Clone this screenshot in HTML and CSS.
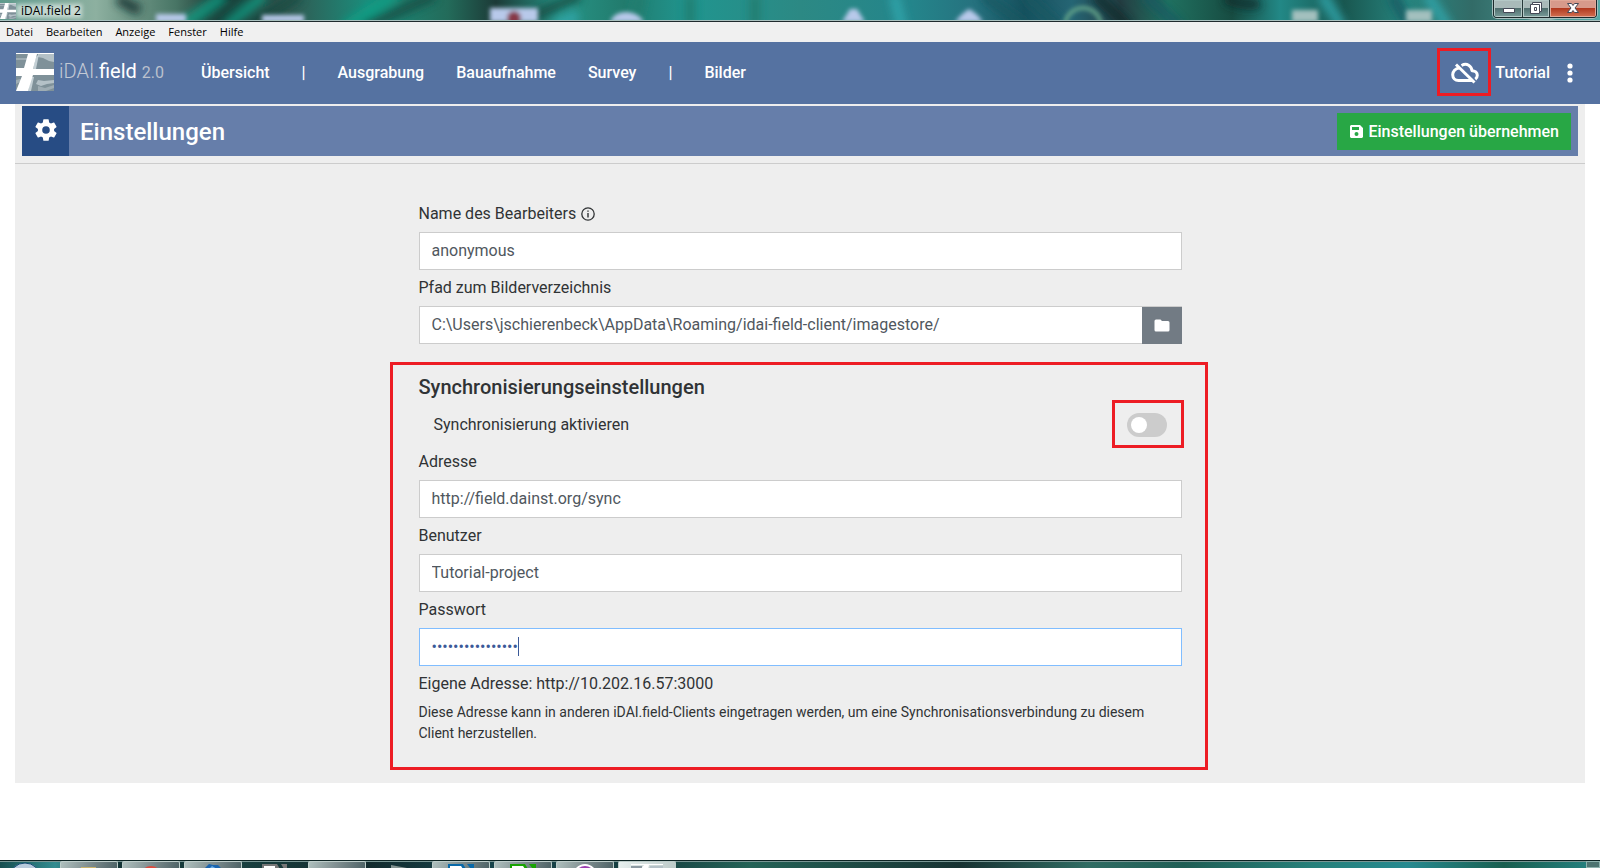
FILE: index.html
```html
<!DOCTYPE html>
<html lang="de">
<head>
<meta charset="utf-8">
<title>iDAI.field 2</title>
<link rel="stylesheet" href="styles.css">
</head>
<body>
<svg class="symbols" aria-hidden="true">
  <symbol id="logo" viewBox="0 0 38 38">
    <path fill="#7f9199" d="M0 0h38v38H0z"/>
    <path fill="#b4c1c7" d="M22 1h16v8l-5-1-6-3-5-1zM22 27l6 1 10-1v3l-7 1-6 2-5-2z"/>
    <path fill="#9fadb4" d="M0 5h12v2H0zM22 33l7 2 9-3v3l-8 3h-8zM0 27l4-1 2 2-6 3z"/>
    <path fill="#c4d0d5" d="M20 4l3-3-3 15h-3zM15 24h3l-3 14h-3z"/>
    <path fill="#fff" d="M0 0h38v1H0zM12 1h9l-4 15h21v6H17l-5 16H0l6-15H0v-8h8z"/>
  </symbol>
</svg>

<header class="titlebar">
  <svg class="titlebar-glass" viewBox="0 0 1600 22" preserveAspectRatio="none" aria-hidden="true">
    <defs>
      <linearGradient id="glass">
        <stop offset="0" stop-color="#5f9a8c"/><stop offset=".06" stop-color="#8db0a0"/>
        <stop offset=".11" stop-color="#487565"/><stop offset=".14" stop-color="#172f2d"/>
        <stop offset=".18" stop-color="#315850"/><stop offset=".23" stop-color="#1b8d7c"/>
        <stop offset=".28" stop-color="#236b5a"/><stop offset=".31" stop-color="#1c3a37"/>
        <stop offset=".35" stop-color="#279486"/><stop offset=".39" stop-color="#227b6d"/>
        <stop offset=".43" stop-color="#20958f"/><stop offset=".5" stop-color="#2c8984"/>
        <stop offset=".57" stop-color="#24858b"/><stop offset=".61" stop-color="#26717e"/>
        <stop offset=".64" stop-color="#18505d"/><stop offset=".67" stop-color="#256574"/>
        <stop offset=".7" stop-color="#243d42"/><stop offset=".73" stop-color="#207160"/>
        <stop offset=".77" stop-color="#174c42"/><stop offset=".8" stop-color="#228886"/>
        <stop offset=".84" stop-color="#195750"/><stop offset=".88" stop-color="#27857f"/>
        <stop offset=".92" stop-color="#326b67"/><stop offset="1" stop-color="#55aaa6"/>
      </linearGradient>
      <filter id="soft" x="-5%" y="-50%" width="110%" height="200%"><feGaussianBlur stdDeviation="2"/></filter>
      <filter id="softer" x="-5%" y="-100%" width="110%" height="300%"><feGaussianBlur stdDeviation="4"/></filter>
    </defs>
    <path fill="url(#glass)" d="M0 0h1600v22H0z"/>
    <g filter="url(#softer)" opacity=".8" fill="none" stroke-width="11">
      <path stroke="#10a086" d="M180 27l44-32M225 27l40-32M345 27l50-32"/>
      <path stroke="#154c43" d="M200 27l44-32M250 27l50-32M365 27l70-32M510 27l70-32"/>
      <path stroke="#31a8ae" d="M555 26q16-6 22-12M894-5l8 32M1322-5l20 32M1427-5l21 32"/>
      <path stroke="#175862" d="M983-5l44 32M1024-5l36 32M1145-5l35 32M1392-5l18 32"/>
      <path stroke="#247b6d" d="M641-5l-8 32M690-5v32M755-5v32"/>
      <path stroke="#102c2b" d="M1095-5l34 32M1225-2q25 10 34 4M118-2q12 9 22 12"/>
    </g>
    <g filter="url(#soft)">
      <path fill="#b8c9ea" d="M156 14h30v8h-30zM262 15h42v7h-42zM490 8h48v14h-48zM610 22q4-10 16-10t18 10zM842 22l8-13h7l8 13zM955 22q6-8 14-13 9 5 14 13z"/>
      <path fill="#a3c0be" d="M1292 10h26v12h-26zM1406 10h26v12h-26zM1530 16h24v6h-24z"/>
      <circle cx="514" cy="18" r="7" fill="#873846"/>
      <circle cx="1083" cy="26" r="18" fill="none" stroke="#61a188" stroke-width="4"/>
      <path fill="#edf3f0" opacity=".65" d="M16 4h66v14H16z"/>
    </g>
    <path fill="#a9c1bf" d="M0 20h1600v1H0z"/>
    <path fill="#202b2e" d="M0 21h1600v1H0z"/>
  </svg>
  <svg class="titlebar-logo" aria-hidden="true"><use href="#logo"/></svg>
  <span class="titlebar-text">iDAI.field 2</span>
  <div class="window-controls">
    <button class="window-button" type="button" aria-label="Minimieren">
      <svg width="28" height="17" viewBox="0 0 28 17"><path fill="#fff" stroke="#454957" d="M9.500 8.500h11v4h-11z"/></svg>
    </button>
    <button class="window-button" type="button" aria-label="Verkleinern">
      <svg width="26" height="17" viewBox="0 0 26 17"><path fill="#fff" stroke="#454957" d="M9.500 2.500h9v9h-2v2h-9v-9h2zM11.500 7.500h2v3h-2z"/><path fill="none" stroke="#454957" d="M9.500 4.500h7v7"/></svg>
    </button>
    <button class="window-button window-button-close" type="button" aria-label="Schließen">
      <svg width="46" height="17" viewBox="0 0 46 17"><path fill="#fff" stroke="#454957" d="M17.500 3.500h4l1.500 2 1.500-2h4l-3.500 4.500 3.500 4.500h-4l-1.500-2-1.500 2h-4l3.500-4.500z"/></svg>
    </button>
  </div>
</header>

<nav class="menubar" aria-label="Menü">
  <button type="button">Datei</button>
  <button type="button">Bearbeiten</button>
  <button type="button">Anzeige</button>
  <button type="button">Fenster</button>
  <button type="button">Hilfe</button>
</nav>

<nav class="navbar" aria-label="Navigation">
  <a class="brand" href="#">
    <svg class="brand-logo" aria-hidden="true"><use href="#logo"/></svg>
    <span class="brand-name"><span class="brand-thin">iDAI.</span><span class="brand-strong">field</span> <span class="brand-version">2.0</span></span>
  </a>
  <div class="nav-links">
    <a href="#">Übersicht</a>
    <span>|</span>
    <a href="#">Ausgrabung</a>
    <a href="#">Bauaufnahme</a>
    <a href="#">Survey</a>
    <span>|</span>
    <a href="#">Bilder</a>
  </div>
  <div class="nav-status">
    <span class="sync-state">
      <svg width="28" height="22" viewBox="0 0 28 22" aria-label="Nicht synchronisiert">
        <g fill="none" stroke="#fff" stroke-width="3" stroke-linejoin="round">
          <path d="M8 6C4.500 6.500 1.700 9.500 1.700 12.800c0 3.400 2.500 5.700 5.800 5.700h13.500"/>
          <path d="M10.500 3.500C16 .500 20.500 4 21 8.700c3 0 5.300 1.800 5.300 4.600 0 1.600-.700 2.900-2 3.900"/>
          <path d="M5 2.500l18.500 18"/>
        </g>
      </svg>
    </span>
    <span class="project">Tutorial</span>
    <button class="more" type="button" aria-label="Mehr">
      <svg width="6" height="20" viewBox="0 0 6 20"><g fill="#fff"><circle cx="3" cy="3" r="2.600"/><circle cx="3" cy="10" r="2.600"/><circle cx="3" cy="17" r="2.600"/></g></svg>
    </button>
  </div>
</nav>

<main class="panel">
  <div class="panel-header">
    <div class="heading-bar">
      <span class="heading-icon">
        <svg width="26" height="26" viewBox="0 0 24 24" aria-hidden="true"><path fill="#fff" d="M19.430 12.980c.040-.320.070-.640.070-.980s-.030-.660-.070-.980l2.110-1.650c.190-.150.240-.420.120-.640l-2-3.460c-.120-.220-.390-.300-.610-.220l-2.490 1c-.520-.400-1.080-.730-1.690-.980l-.380-2.650C14.460 2.180 14.250 2 14 2h-4c-.250 0-.460.180-.490.420l-.380 2.650c-.610.250-1.170.590-1.690.980l-2.490-1c-.230-.090-.490 0-.610.220l-2 3.460c-.130.220-.070.490.120.640l2.110 1.650c-.040.320-.070.650-.070.980s.030.660.070.980l-2.110 1.650c-.190.150-.240.420-.120.640l2 3.460c.120.220.390.300.610.220l2.490-1c.520.400 1.080.730 1.690.980l.380 2.650c.030.240.240.420.490.420h4c.250 0 .460-.180.490-.420l.380-2.650c.610-.250 1.170-.590 1.690-.980l2.490 1c.230.090.490 0 .610-.220l2-3.460c.120-.220.070-.490-.120-.640zM12 15.500A3.500 3.500 0 1 1 12 8.500a3.500 3.500 0 0 1 0 7z"/></svg>
      </span>
      <h1>Einstellungen</h1>
      <button class="apply" type="submit" form="settings">
        <svg width="13" height="13" viewBox="0 0 13 13" aria-hidden="true"><path fill="#fff" fill-rule="evenodd" d="M1 0h9l3 3v9l-1 1H1l-1-1V1zM2 2v3h7V2zm4.500 5a2 2 0 1 0 0 4 2 2 0 0 0 0-4z"/></svg>
        <span class="apply-text">Einstellungen übernehmen</span>
      </button>
    </div>
  </div>

  <form class="settings" id="settings">
    <div class="field">
      <label for="editor">Name des Bearbeiters
        <svg class="info" width="14" height="14" viewBox="0 0 14 14" aria-hidden="true"><circle cx="7" cy="7" r="6.200" fill="none" stroke="currentColor" stroke-width="1.300"/><path fill="currentColor" d="M6.300 3.400h1.400v1.400H6.300zM6.300 6h1.400v4.600H6.300z"/></svg>
      </label>
      <input class="text" id="editor" type="text" value="anonymous">
    </div>
    <div class="field">
      <label for="path">Pfad zum Bilderverzeichnis</label>
      <div class="input-group">
        <input class="text" id="path" type="text" value="C:\Users\jschierenbeck\AppData\Roaming/idai-field-client/imagestore/">
        <button class="browse" type="button" aria-label="Verzeichnis wählen">
          <svg width="16" height="13" viewBox="0 0 16 13" aria-hidden="true"><path fill="#fff" d="M2 .500h4.500L8 2h6q1.500 0 1.500 1.500v7.500q0 1.500-1.500 1.500H2Q.500 12.500.500 11V2Q.500.500 2 .500z"/></svg>
        </button>
      </div>
    </div>

    <section class="sync">
      <h2>Synchronisierungseinstellungen</h2>
      <div class="toggle-row">
        <label for="enable">Synchronisierung aktivieren</label>
        <span class="toggle-mark"><input class="toggle" id="enable" type="checkbox"></span>
      </div>
      <div class="field">
        <label for="address">Adresse</label>
        <input class="text" id="address" type="text" value="http://field.dainst.org/sync">
      </div>
      <div class="field">
        <label for="user">Benutzer</label>
        <input class="text" id="user" type="text" value="Tutorial-project">
      </div>
      <div class="field">
        <label for="password">Passwort</label>
        <div class="password">
          <input class="text" id="password" type="password" value="tutorialpassword" autofocus>
          <span class="caret"></span>
        </div>
      </div>
      <p class="own-address">Eigene Adresse: http://10.202.16.57:3000</p>
      <p class="hint">Diese Adresse kann in anderen iDAI.field-Clients eingetragen werden, um eine Synchronisationsverbindung zu diesem Client herzustellen.</p>
    </section>
  </form>
</main>

<footer class="taskbar">
  <svg class="start" width="30" height="7" viewBox="0 0 30 7" aria-hidden="true"><ellipse cx="15" cy="15" rx="15" ry="14" fill="#b9cbdc" stroke="#174b74"/></svg>
  <span class="task"><svg width="16" height="7" viewBox="0 0 16 7"><path fill="#c9b36b" d="M0 5h15v2H0z"/></svg></span>
  <span class="task"><svg width="22" height="7" viewBox="0 0 22 7"><circle cx="11" cy="15" r="11" fill="#dd4b3e"/></svg></span>
  <span class="task"><svg width="18" height="7" viewBox="0 0 18 7"><path fill="#1c65ae" d="M0 7l5-5 4 1 5 0 4 4z"/><path fill="#6aaee8" d="M5 7l3-3 5 3z"/></svg></span>
  <span class="task task-plain"><svg width="26" height="7" viewBox="0 0 26 7"><path fill="#777" d="M0 2h15l3 5H0zM19 2h6v5h-3z"/><path fill="#fff" d="M2 4h11v3H2z"/></svg></span>
  <span class="task"></span>
  <span class="task task-plain"><svg width="18" height="7" viewBox="0 0 18 7"><path fill="#839391" d="M1 3l16 3v1H1z"/></svg></span>
  <span class="task"><svg width="26" height="7" viewBox="0 0 26 7"><path fill="#0869a8" d="M0 2h15l3 5H0zM19 2h7v5h-3z"/><path fill="#fff" d="M2 4h11l2 3H2z"/></svg></span>
  <span class="task"><svg width="26" height="7" viewBox="0 0 26 7"><path fill="#18a303" d="M0 2h15l3 5H0zM19 2h7v5h-3z"/><path fill="#fff" d="M2 4h11l2 3H2z"/></svg></span>
  <span class="task"><svg width="24" height="7" viewBox="0 0 24 7"><circle cx="12" cy="14" r="11" fill="#9c3fb0" stroke="#fff" stroke-width="2"/></svg></span>
  <span class="task task-active"><svg width="32" height="7" viewBox="0 0 32 7"><path fill="#8d9ba3" d="M0 4h11v3H0z"/><path fill="#fff" d="M0 2h32v1H18l-1 4h-7l3-4H0z"/><path fill="#b4c1c7" d="M19 4h13v3H18z"/></svg></span>
  <span class="show-desktop"></span>
</footer>
</body>
</html>
```
FILE: styles.css
```css
* {
  box-sizing: border-box;
}

body {
  margin: 0;
  min-height: 100vh;
  display: flex;
  flex-direction: column;
  background: #fff;
  color: #303335;
  font: 16px/24px Roboto, "Liberation Sans", sans-serif;
}

button,
input {
  font: inherit;
}

button {
  padding: 0;
  border: 0;
  background: none;
  color: inherit;
}

a {
  color: inherit;
  text-decoration: none;
}

h1,
h2,
p {
  margin: 0;
}

svg {
  display: block;
}

.symbols {
  position: absolute;
  width: 0;
  height: 0;
}

/* Window frame */
.titlebar {
  position: relative;
  display: flex;
  align-items: center;
  gap: 5px;
  height: 22px;
  padding-right: 3px;
  color: #000;
  font: 12px/20px "Open Sans", "Noto Sans", sans-serif;
}

.titlebar-glass {
  position: absolute;
  inset: 0;
  width: 100%;
  height: 22px;
}

.titlebar-logo {
  position: relative;
  width: 16px;
  height: 16px;
}

.titlebar-text {
  position: relative;
}

.window-controls {
  position: relative;
  align-self: flex-start;
  display: flex;
  margin-left: auto;
  height: 18px;
  border: 1px solid #1d2a2c;
  border-top: 0;
  border-radius: 0 0 4px 4px;
  box-shadow: 0 0 0 1px #a5c0bf;
  overflow: hidden;
}

.window-button {
  height: 17px;
  background: linear-gradient(#a9bab9 0 45%, #506f6e 50%, #799c9a);
  box-shadow: inset 0 0 0 1px #b4c8c6;
}

.window-button + .window-button {
  border-left: 1px solid #27393a;
}

.window-button-close {
  background: linear-gradient(#d79a8b 0 45%, #b23a20 50%, #d27152);
  box-shadow: inset 0 0 0 1px #e0a898;
}

.menubar {
  display: flex;
  gap: 13px;
  height: 20px;
  padding: 0 6px;
  background: #f0f0f0;
  color: #000;
  font: 11px/20px "Open Sans", "Noto Sans", sans-serif;
}

/* Application bar */
.navbar {
  display: flex;
  align-items: center;
  min-height: 62px;
  padding: 0 27px 0 16px;
  background: #5572a1;
  color: #fff;
  font-weight: 500;
}

.brand {
  display: flex;
  align-items: center;
  gap: 5px;
  margin-right: 37px;
  padding-bottom: 2px;
}

.brand-logo {
  width: 38px;
  height: 38px;
}

.brand-name {
  font-size: 20px;
  font-weight: 400;
}

.brand-thin {
  font-weight: 300;
  color: #c3c9d5;
}

.brand-version {
  font-size: 16px;
  font-weight: 400;
  color: #bbc1cd;
}

.nav-links {
  display: flex;
  gap: 32px;
}

.nav-status {
  display: flex;
  align-items: center;
  gap: 4px;
  margin-left: auto;
}

.sync-state {
  display: grid;
  place-items: center;
  width: 54px;
  height: 48px;
  margin-bottom: 2px;
  padding: 2px 0 0 2px;
  border: 3px solid #ed1c24;
}

.more {
  margin-left: 13px;
}

/* Settings page */
.panel {
  margin: 0 15px;
  padding-bottom: 13px;
  background: #eee;
}

.panel-header {
  padding: 2px 7px 7px;
  border-bottom: 1px solid #ccc;
}

.heading-bar {
  display: flex;
  align-items: center;
  height: 50px;
  padding-right: 7px;
  background: #667eaa;
  color: #fff;
}

.heading-icon {
  display: grid;
  place-items: center;
  width: 47px;
  height: 50px;
  margin-right: 11px;
  padding-bottom: 2px;
  background: #274c84;
}

h1 {
  padding-top: 2px;
  font-size: 24px;
  font-weight: 500;
}

.apply {
  display: flex;
  align-items: center;
  gap: 5px;
  height: 37px;
  margin-left: auto;
  padding: 0 12px 0 13px;
  background: #28a745;
  font-weight: 500;
}

.apply-text {
  padding-top: 2px;
}

.settings {
  width: calc(50% - 22px);
  margin: 0 auto;
  padding-top: 32px;
}

.field label {
  display: flex;
  align-items: center;
  gap: 5px;
  height: 36px;
}

.text {
  display: block;
  width: 100%;
  height: 38px;
  padding: 0 12px 2px;
  border: 1px solid #ccc;
  border-radius: 0;
  background: #fff;
  color: #50575e;
  outline: 0;
}

.text[type="password"] {
  border-color: #80bdff;
  color: #3b5998;
  caret-color: transparent;
}

.password {
  position: relative;
}

.caret {
  position: absolute;
  top: 9px;
  left: 99px;
  width: 1px;
  height: 19px;
  background: #3b5998;
}

.input-group {
  display: flex;
}

.input-group .text {
  flex: 1;
  min-width: 0;
  border-right: 0;
}

.browse {
  display: grid;
  place-items: center;
  width: 40px;
  height: 38px;
  border-top: 1px solid #ccc;
  background: #727b84;
}

/* Highlighted section */
.sync {
  margin: 18px -26px 0 -29px;
  padding: 8px 23px 23px 26px;
  border: 3px solid #ed1c24;
}

h2 {
  margin-bottom: 2px;
  font-size: 20px;
  font-weight: 500;
  line-height: 28px;
}

.toggle-row {
  display: flex;
  align-items: center;
  justify-content: space-between;
  height: 41px;
  margin-right: -2px;
  padding-left: 15px;
}

.toggle-row label {
  padding-top: 2px;
}

.toggle-mark {
  width: 72px;
  height: 48px;
  padding: 10px 12px;
  border: 3px solid #ed1c24;
}

.toggle {
  appearance: none;
  display: block;
  width: 40px;
  height: 24px;
  margin: 0;
  padding: 4px;
  border-radius: 12px;
  background: #ccc;
}

.toggle::before {
  content: "";
  display: block;
  width: 16px;
  height: 16px;
  border-radius: 50%;
  background: #fff;
}

.toggle:checked::before {
  margin-left: auto;
}

.own-address {
  line-height: 36px;
}

.hint {
  font-size: 14px;
  line-height: 21px;
}

/* Desktop taskbar */
.taskbar {
  display: flex;
  gap: 4px;
  height: 8px;
  margin-top: auto;
  border-top: 1px solid #0c2323;
  box-shadow: inset 0 1px #789593;
  background: linear-gradient(90deg, #174f50, #328c90 55px, #123234 120px, #194040 240px, #12292c 360px, #17444b 480px, #163e40 640px, #246357 750px, #173232 60%, #306c63 68%, #1f5e55 74%, #27807a 82%, #278a90 88%, #195f50 94%, #268484);
  overflow: hidden;
}

.start {
  margin: 1px 16px 0 10px;
}

.task {
  display: grid;
  justify-items: center;
  width: 58px;
  height: 7px;
  border: 1px solid #bdcdca;
  border-bottom: 0;
  border-radius: 2px 2px 0 0;
  background: linear-gradient(110deg, #aebfbd, #7f8e90 50%, #4e6366);
}

.task-plain {
  border-color: transparent;
  background: none;
}

.task-active {
  background: linear-gradient(110deg, #e8f0ef, #bccac8);
}

.show-desktop {
  width: 14px;
  margin-left: auto;
  border: 1px solid #8db2ae;
  background: #4d7471;
}
```
